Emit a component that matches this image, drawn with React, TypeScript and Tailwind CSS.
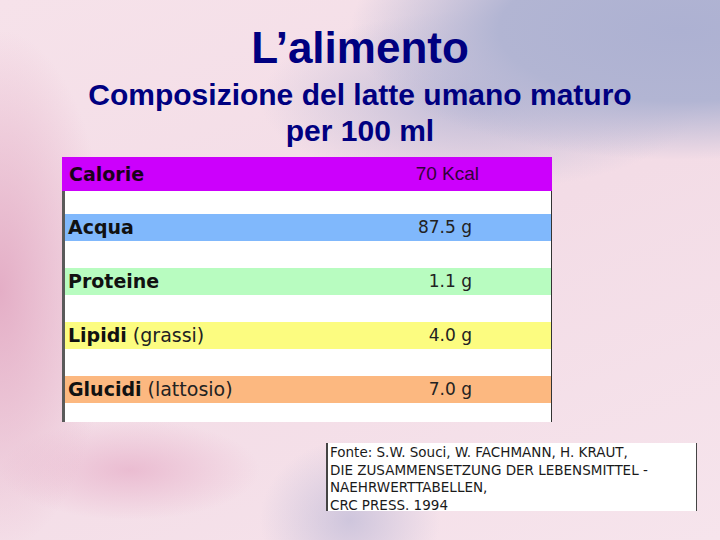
const rows = [
  { label: 'Acqua', extra: '', value: '87.5 g', bg: 'bg-[#80b8fc]' },
  { label: 'Proteine', extra: '', value: '1.1 g', bg: 'bg-[#b8fcc0]' },
  { label: 'Lipidi', extra: '(grassi)', value: '4.0 g', bg: 'bg-[#fcfc80]' },
  { label: 'Glucidi', extra: '(lattosio)', value: '7.0 g', bg: 'bg-[#fcb880]' },
];

export default function App() {
  return (
    <div className="w-[720px] h-[540px] overflow-hidden relative bg-[#f5e0e8] bg-[radial-gradient(ellipse_330px_130px_at_680px_30px,#adb1d2_0%,#b2b5d3_55%,transparent_100%),radial-gradient(ellipse_220px_90px_at_480px_100px,rgba(176,178,210,0.8)_0%,transparent_100%),radial-gradient(ellipse_90px_80px_at_350px_520px,rgba(190,186,215,0.7)_0%,transparent_100%),radial-gradient(ellipse_110px_260px_at_0px_290px,#e4aec6_0%,transparent_100%),radial-gradient(ellipse_130px_50px_at_130px_470px,rgba(232,180,204,0.8)_0%,transparent_100%),linear-gradient(160deg,#f6e2ea_0%,#f3dce6_50%,#f6e4ec_100%)] font-['Liberation_Sans',Arial,sans-serif]">
      <div className="flex flex-col items-center pt-[24px] text-[#000080] font-bold">
        <h1 className="text-[44px] leading-[48px]">L’alimento</h1>
        <p className="text-[30px] leading-[36px] mt-[5px] text-center">
          Composizione del latte umano maturo
          <br />
          per 100 ml
        </p>
      </div>

      <div className="ml-[62px] mt-[8px] w-[490px]">
        <div className="h-[34px] bg-[#cc00fc] flex items-center pl-[7px] pr-[73px] justify-between">
          <span className="font-['DejaVu_Sans',Verdana,sans-serif] font-bold text-[19px] text-[#1a001a]">Calorie</span>
          <span className="text-[19px] text-[#33003a]">70 Kcal</span>
        </div>
        <div className="bg-white border-l-[3px] border-[#5a5a5a] border-r border-r-[#333] pt-[23px] pb-[19px] flex flex-col gap-[27px]">
          {rows.map((r) => (
            <div key={r.label} className={`h-[27px] ${r.bg} flex items-center justify-between pl-[3px] pr-[79px] font-['DejaVu_Sans',Verdana,sans-serif] text-[#111]`}>
              <span className="text-[19px]">
                <span className="font-bold">{r.label}</span>
                {r.extra && <span className="ml-[6px] text-[#222]">{r.extra}</span>}
              </span>
              <span className="text-[17px] text-[#222]">{r.value}</span>
            </div>
          ))}
        </div>
      </div>

      <div className="flex justify-end pr-[23px] mt-[21px]">
        <div className="w-[371px] h-[68px] bg-white border-l-2 border-[#444] border-r border-r-[#444] pl-[2px] pt-[1px] font-['DejaVu_Sans',Verdana,sans-serif] text-[13.5px] leading-[17.5px] text-[#1a1a1a] whitespace-nowrap">
          <div>Fonte: S.W. Souci, W. FACHMANN, H. KRAUT,</div>
          <div>DIE ZUSAMMENSETZUNG DER LEBENSMITTEL -</div>
          <div>NAEHRWERTTABELLEN,</div>
          <div>CRC PRESS. 1994</div>
        </div>
      </div>
    </div>
  );
}
